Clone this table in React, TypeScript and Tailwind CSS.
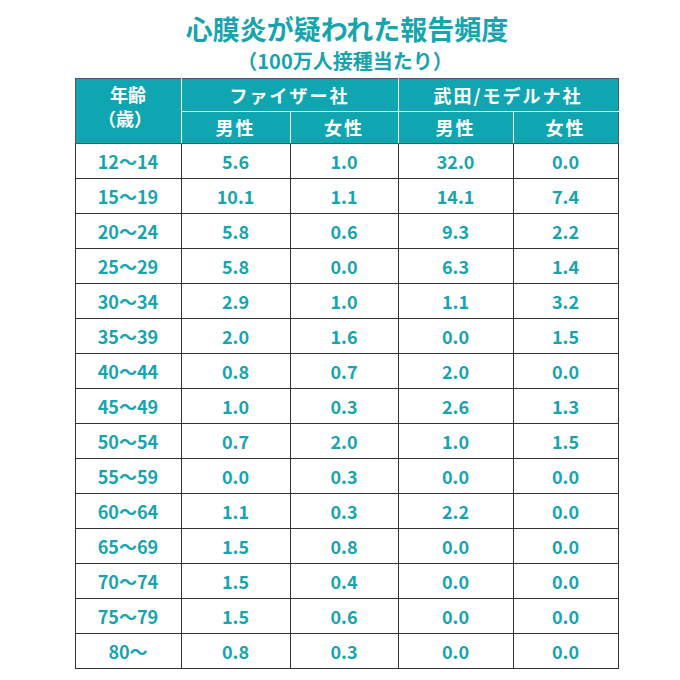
const rows: [string, string, string, string, string][] = [
  ['12～14', '5.6', '1.0', '32.0', '0.0'],
  ['15～19', '10.1', '1.1', '14.1', '7.4'],
  ['20～24', '5.8', '0.6', '9.3', '2.2'],
  ['25～29', '5.8', '0.0', '6.3', '1.4'],
  ['30～34', '2.9', '1.0', '1.1', '3.2'],
  ['35～39', '2.0', '1.6', '0.0', '1.5'],
  ['40～44', '0.8', '0.7', '2.0', '0.0'],
  ['45～49', '1.0', '0.3', '2.6', '1.3'],
  ['50～54', '0.7', '2.0', '1.0', '1.5'],
  ['55～59', '0.0', '0.3', '0.0', '0.0'],
  ['60～64', '1.1', '0.3', '2.2', '0.0'],
  ['65～69', '1.5', '0.8', '0.0', '0.0'],
  ['70～74', '1.5', '0.4', '0.0', '0.0'],
  ['75～79', '1.5', '0.6', '0.0', '0.0'],
  ['80～', '0.8', '0.3', '0.0', '0.0'],
];

export default function App() {
  return (
    <div
      className="w-[680px] h-[680px] bg-white flex flex-col items-center"
      style={{ fontFamily: '"Noto Sans CJK JP", "Noto Sans", sans-serif' }}
    >
      {/* Title */}
      <h1 className="mt-[11px] ml-[14px] text-[27px] leading-[36px] font-bold text-[#17a4ae]">
        心膜炎が疑われた報告頻度
      </h1>
      <p className="ml-[10px] text-[20px] leading-[27px] font-bold text-[#17a4ae]">
        （100万人接種当たり）
      </p>

      <table className="mt-[4px] ml-[13px] border-collapse table-fixed w-[543px] text-[18px] font-bold">
        <colgroup>
          <col className="w-[106px]" />
          <col className="w-[109px]" />
          <col className="w-[108px]" />
          <col className="w-[115px]" />
          <col className="w-[105px]" />
        </colgroup>
        <thead className="bg-[#0fa6b2] text-white">
          <tr className="h-[33px]">
            <th
              rowSpan={2}
              className="border border-[#555] border-r-white align-top pt-[3px] leading-[24px] font-bold"
            >
              年齢
              <br />
              <span className="inline-block -ml-[6px]">（歳）</span>
            </th>
            <th colSpan={2} className="border-t border-[#555] border-b border-b-white border-r border-r-white font-bold tracking-[2px]">
              ファイザー社
            </th>
            <th colSpan={2} className="border border-[#555] border-l-white border-b-white font-bold tracking-[2px]">
              武田/モデルナ社
            </th>
          </tr>
          <tr className="h-[32px]">
            <th className="border-r border-white border-b border-b-[#555] font-bold tracking-[2px]">男性</th>
            <th className="border-r border-white border-b border-b-[#555] font-bold tracking-[2px]">女性</th>
            <th className="border-r border-white border-b border-b-[#555] font-bold tracking-[2px]">男性</th>
            <th className="border-r border-[#555] border-b border-b-[#555] font-bold tracking-[2px]">女性</th>
          </tr>
        </thead>
        <tbody className="text-[#17a4ae]">
          {rows.map((r) => (
            <tr key={r[0]} className="h-[35px]">
              {r.map((v, i) => (
                <td key={i} className="border border-[#333] text-center leading-none">
                  {v}
                </td>
              ))}
            </tr>
          ))}
        </tbody>
      </table>
    </div>
  );
}
